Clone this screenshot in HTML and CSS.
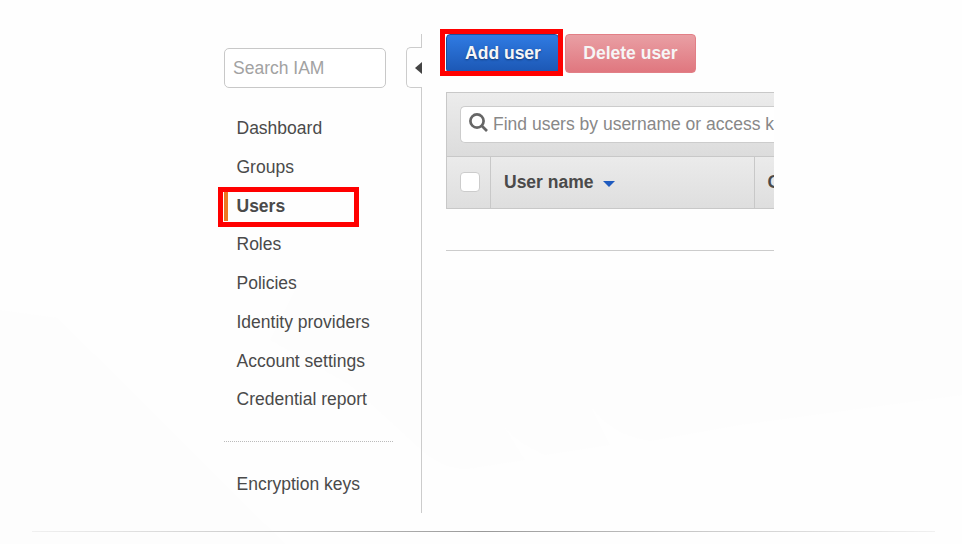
FILE: index.html
```html
<!DOCTYPE html>
<html lang="en">
<head>
<meta charset="utf-8">
<title>IAM Users</title>
<link rel="stylesheet" href="styles.css">
</head>
<body>
<div class="slide">
  <svg class="watermark" viewBox="0 0 962 544" aria-hidden="true"><path d="M58 318L285 544H0V310Z M270 340L350 385Q400 430 421 450Q450 475 480 467L525 460L500 420Q510 440 545 455L610 445L590 405Q610 435 650 441L695 433L740 425L962 395V280H300Z"/></svg>
  <div class="console">
    <aside class="sidebar">
      <div class="side-search">Search IAM</div>
      <nav class="menu">
        <a>Dashboard</a>
        <a>Groups</a>
        <a class="active">Users<span class="mark mark-users"></span></a>
        <a>Roles</a>
        <a>Policies</a>
        <a>Identity providers</a>
        <a>Account settings</a>
        <a>Credential report</a>
      </nav>
      <div class="separator"></div>
      <nav class="menu"><a>Encryption keys</a></nav>
    </aside>
    <div class="divider">
      <div class="rule-top"></div>
      <div class="collapse"><svg width="7" height="12" viewBox="0 0 7 12"><path d="M0 6L7 0V12Z"/></svg></div>
      <div class="rule-bottom"></div>
    </div>
    <main class="content">
      <div class="actions">
        <div class="button add">Add user<span class="mark mark-add"></span></div>
        <div class="button delete">Delete user</div>
      </div>
      <section class="table">
        <div class="filter">
          <div class="find">
            <svg width="20" height="20" viewBox="0 0 20 20"><circle cx="8" cy="8" r="6.6"/><path d="M12.7 12.7L18 18"/></svg>
            <span>Find users by username or access k</span>
          </div>
        </div>
        <div class="head">
          <div class="check-cell"><span class="checkbox"></span></div>
          <div class="name-cell">User name<svg width="12" height="6" viewBox="0 0 12 6"><path d="M0 0H12L6 6Z"/></svg></div>
          <div class="next-cell">G</div>
        </div>
      </section>
      <div class="end-rule"></div>
    </main>
  </div>
  <div class="footer-rule"></div>
</div>
</body>
</html>
```
FILE: styles.css
```css
* { box-sizing: border-box; }
body {
  margin: 0;
  background: #fefefe;
  color: #4a4a4a;
  font: 17.5px/20px "Liberation Sans", Arial, sans-serif;
}
.slide {
  position: relative;
  width: 962px;
  height: 544px;
  overflow: hidden;
  padding-top: 34px;
}
.watermark { position: absolute; inset: 0; z-index: -1; }
.watermark path { fill: #fdfdfd; }
.console {
  display: flex;
  height: 479px;
  margin-left: 224px;
  width: 550px;
}
.sidebar { width: 169px; padding-top: 14px; }
.side-search {
  width: 162px;
  height: 40px;
  padding: 0 8px;
  border: 1px solid #c8c8c8;
  border-radius: 5px;
  background: #fff;
  color: #a2a2a2;
  line-height: 39px;
}
.menu { padding-top: 21px; }
.menu a {
  position: relative;
  display: block;
  height: 38.75px;
  padding-left: 12.5px;
  line-height: 38.75px;
}
.menu .active { font-weight: bold; }
.menu .active::before {
  content: "";
  position: absolute;
  left: 0;
  top: 4px;
  width: 4px;
  height: 30px;
  background: #ee7622;
}
.mark {
  position: absolute;
  border: 5px solid #f00;
}
.mark-users { left: -6px; top: 0; width: 141px; height: 40px; }
.separator {
  margin-top: 22px;
  border-top: 1px dotted #bbb;
}
.separator + .menu { padding-top: 23px; }
.divider {
  display: flex;
  flex-direction: column;
  width: 16px;
  margin-left: 12.5px;
  flex: none;
}
.rule-top, .rule-bottom {
  width: 1px;
  margin-left: auto;
  margin-right: 0;
  background: #ccc;
}
.rule-top { height: 13px; }
.rule-bottom { flex: 1; }
.collapse {
  display: flex;
  align-items: center;
  justify-content: flex-end;
  height: 41px;
  border: 1px solid #ccc;
  border-right: 0;
  border-radius: 5px 0 0 5px;
}
.collapse path { fill: #444; }
.content { width: 328px; margin-left: 24.5px; flex: none; overflow: visible; }
.actions { display: flex; gap: 6px; }
.button {
  position: relative;
  height: 39px;
  border-radius: 4px;
  color: #f6f6f6;
  font-weight: bold;
  line-height: 37px;
  text-align: center;
}
.add {
  width: 113px;
  padding-left: 1px;
  border: 1px solid #1b4f9c;
  background: linear-gradient(#2f7be3, #1c57b4);
  text-shadow: 0 1px 2px #123a78;
}
.delete {
  width: 131px;
  border: 1px solid #e27f86;
  background: linear-gradient(#e99fa4, #e0777f);
}
.mark-add { left: -7px; top: -6px; width: 123px; height: 47px; }
.table {
  margin-top: 19px;
  height: 117px;
  overflow: hidden;
  border: 1px solid #c8c8c8;
  border-right: 0;
}
.filter {
  height: 63px;
  padding: 13px 0 0 13px;
  background: linear-gradient(#ececec, #dcdcdc);
}
.find {
  display: flex;
  align-items: center;
  height: 37px;
  border: 1px solid #ccc;
  border-right: 0;
  border-radius: 5px 0 0 5px;
  background: #fff;
  color: #888;
  white-space: nowrap;
}
.find span { margin-top: -1px; }
.find svg {
  flex: none;
  margin: -3px 4px 0 8px;
  fill: none;
  stroke: #666;
  stroke-width: 2.7;
}
.head {
  display: flex;
  height: 53px;
  border-top: 1px solid #c8c8c8;
  background: linear-gradient(#ebebeb, #dedede);
  font-weight: bold;
  line-height: 51px;
}
.check-cell {
  width: 44px;
  padding: 15px 0 0 13px;
  border-right: 1px solid #c8c8c8;
}
.checkbox {
  display: block;
  width: 20px;
  height: 20px;
  border: 1px solid #ccc;
  border-radius: 4px;
  background: #fff;
}
.name-cell {
  display: flex;
  align-items: center;
  gap: 9px;
  width: 264px;
  padding: 0 0 2px 13px;
  border-right: 1px solid #c8c8c8;
}
.name-cell svg { margin-top: 4px; }
.name-cell path { fill: #1f5bbf; }
.next-cell { width: 19px; padding-left: 12.5px; overflow: hidden; }
.end-rule { margin-top: 41px; height: 1px; background: #ccc; }
.footer-rule {
  height: 1px;
  margin: 18px 27px 0 32px;
  background: linear-gradient(90deg, #f0f0f0, #ccc 25%, #999 50%, #ccc 75%, #f0f0f0);
}
```
